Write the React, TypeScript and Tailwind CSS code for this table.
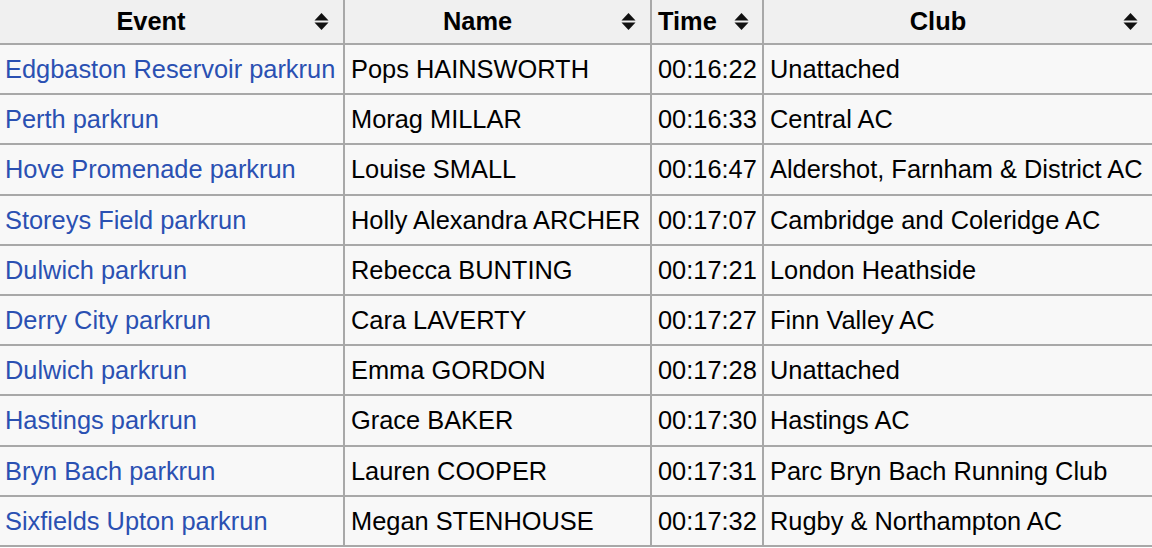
const rows = [
  { event: "Edgbaston Reservoir parkrun", name: "Pops HAINSWORTH", time: "00:16:22", club: "Unattached" },
  { event: "Perth parkrun", name: "Morag MILLAR", time: "00:16:33", club: "Central AC" },
  { event: "Hove Promenade parkrun", name: "Louise SMALL", time: "00:16:47", club: "Aldershot, Farnham & District AC" },
  { event: "Storeys Field parkrun", name: "Holly Alexandra ARCHER", time: "00:17:07", club: "Cambridge and Coleridge AC" },
  { event: "Dulwich parkrun", name: "Rebecca BUNTING", time: "00:17:21", club: "London Heathside" },
  { event: "Derry City parkrun", name: "Cara LAVERTY", time: "00:17:27", club: "Finn Valley AC" },
  { event: "Dulwich parkrun", name: "Emma GORDON", time: "00:17:28", club: "Unattached" },
  { event: "Hastings parkrun", name: "Grace BAKER", time: "00:17:30", club: "Hastings AC" },
  { event: "Bryn Bach parkrun", name: "Lauren COOPER", time: "00:17:31", club: "Parc Bryn Bach Running Club" },
  { event: "Sixfields Upton parkrun", name: "Megan STENHOUSE", time: "00:17:32", club: "Rugby & Northampton AC" },
]

function SortIcon() {
  return (
    <svg width="15" height="17" viewBox="0 0 15 17" className="shrink-0">
      <polygon points="0.5,7.5 7.5,0 14.5,7.5" fill="#111" />
      <polygon points="0.5,9.5 7.5,17 14.5,9.5" fill="#111" />
    </svg>
  )
}

function HeaderCell({ label }: { label: string }) {
  return (
    <th className="border-2 border-[#a8a8a8] bg-[#f0f0f0] pl-[6px] pr-[14px] py-0 align-middle">
      <div className="flex items-center gap-[17px]">
        <span className="flex-1 text-center font-bold">{label}</span>
        <SortIcon />
      </div>
    </th>
  )
}

export default function App() {
  return (
    <div className="w-[1152px] h-[548px] overflow-hidden bg-white">
      <table
        className="-ml-[3px] -mt-[3px] w-[1155px] table-fixed border-collapse text-[25.4px] leading-[30px] text-black"
        style={{ fontFamily: '"Liberation Sans", Arial, sans-serif' }}
      >
        <colgroup>
          <col className="w-[346px]" />
          <col className="w-[307px]" />
          <col className="w-[112px]" />
          <col className="w-[390px]" />
        </colgroup>
        <thead>
          <tr className="h-[46px]">
            <HeaderCell label="Event" />
            <HeaderCell label="Name" />
            <HeaderCell label="Time" />
            <HeaderCell label="Club" />
          </tr>
        </thead>
        <tbody>
          {rows.map((r, i) => (
            <tr key={i} className="h-[50.2px] bg-[#f8f8f8]">
              <td className="border-2 border-[#a8a8a8] px-[6px] py-0 whitespace-nowrap">
                <a className="text-[#2a50b2]">{r.event}</a>
              </td>
              <td className="border-2 border-[#a8a8a8] px-[6px] py-0 whitespace-nowrap">{r.name}</td>
              <td className="border-2 border-[#a8a8a8] px-[6px] py-0 whitespace-nowrap">{r.time}</td>
              <td className="border-2 border-[#a8a8a8] px-[6px] py-0 whitespace-nowrap">{r.club}</td>
            </tr>
          ))}
        </tbody>
      </table>
    </div>
  )
}
